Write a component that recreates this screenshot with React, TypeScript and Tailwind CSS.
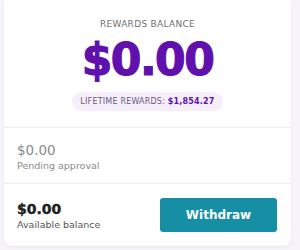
export default function App() {
  return (
    <div className="w-[300px] h-[250px] bg-[#f6f4fa] px-[4px] pb-[4px] font-['DejaVu_Sans',sans-serif]">
      <div className="h-full w-[287px] bg-white rounded-b-[8px] shadow-[0_1px_3px_rgba(60,40,120,0.08)] flex flex-col">
        {/* header */}
        <div className="flex flex-col items-center pt-[19px] h-[128px] border-b border-[#efedf3]">
          <p className="text-[9px] tracking-[0.3px] text-[#6f6f6f] leading-[11px]">REWARDS BALANCE</p>
          <p className="text-[44px] font-extrabold text-[#5f10ad] leading-[48px] mt-[6px] tracking-[-1.5px] [-webkit-text-stroke:1.2px_#5f10ad]">$0.00</p>
          <div className="mt-[8px] bg-[#f6effb] rounded-full px-[8px] h-[19px] flex items-center text-[8px] text-[#6b5a7c] tracking-[0.2px]">
            LIFETIME REWARDS:&nbsp;<span className="font-bold text-[#5f10ad]">$1,854.27</span>
          </div>
        </div>
        {/* pending */}
        <div className="h-[56px] border-b border-[#efedf3] px-[13px] pt-[15px]">
          <p className="text-[13.5px] text-[#8a8a8a] leading-[15px]">$0.00</p>
          <p className="text-[9.5px] text-[#8a8a8a] leading-[12px] mt-[2px]">Pending approval</p>
        </div>
        {/* available */}
        <div className="flex-1 flex items-center justify-between px-[13px] pr-[14px]">
          <div className="pt-[2px]">
            <p className="text-[14px] font-extrabold text-[#1f1f1f] leading-[16px] [-webkit-text-stroke:0.4px_#1f1f1f]">$0.00</p>
            <p className="text-[9.5px] text-[#555] leading-[12px] mt-[2px]">Available balance</p>
          </div>
          <button className="w-[117px] h-[34px] rounded-[3px] bg-[#168ea4] text-white text-[12px] font-bold">
            Withdraw
          </button>
        </div>
      </div>
    </div>
  );
}
